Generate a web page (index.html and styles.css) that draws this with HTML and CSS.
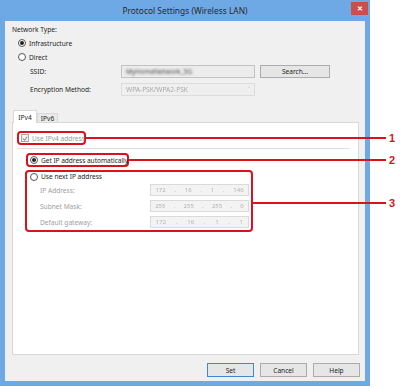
FILE: index.html
```html
<!DOCTYPE html>
<html lang="en">
<head>
    <meta charset="UTF-8">
    <title>Protocol Settings (Wireless LAN)</title>
    <link rel="stylesheet" href="styles.css">
</head>
<body>
<div class="page">
    <div class="window">
        <div class="titlebar">
            <span class="title">Protocol Settings (Wireless LAN)</span>
            <span class="close">&#10005;</span>
        </div>
        <div class="client">
            <div class="label">Network Type:</div>
            <div class="radio-row"><span class="radio on"></span>Infrastructure</div>
            <div class="radio-row"><span class="radio"></span>Direct</div>
            <div class="field-row ssid">
                <span class="field-label">SSID:</span>
                <span class="input"><span class="blur">MyHomeNetwork_5G</span></span>
                <span class="btn search">Search...</span>
            </div>
            <div class="field-row enc">
                <span class="field-label">Encryption Method:</span>
                <span class="select"><span class="blur light">WPA-PSK/WPA2-PSK</span><span class="arrow">&#709;</span></span>
            </div>
            <div class="tabs">
                <span class="tab active">IPv4</span>
                <span class="tab">IPv6</span>
            </div>
            <div class="panel">
                <div class="mark box1">
                    <span class="check">
                        <svg width="7" height="7" viewBox="0 0 7 7"><path d="M1 3.5 L3 5.5 L6 1.5" fill="none" stroke="#8a8a8a" stroke-width="1.2"/></svg>
                    </span>
                    <span class="dim">Use IPv4 address</span>
                </div>
                <div class="sep"></div>
                <div class="mark box2">
                    <span class="radio on"></span>Get IP address automatically
                </div>
                <div class="mark box3">
                    <div class="radio-row small"><span class="radio"></span>Use next IP address</div>
                    <div class="ip-row">
                        <span class="ip-label">IP Address:</span>
                        <span class="ip"><span>172</span>.<span>16</span>.<span>1</span>.<span>146</span></span>
                    </div>
                    <div class="ip-row">
                        <span class="ip-label">Subnet Mask:</span>
                        <span class="ip"><span>255</span>.<span>255</span>.<span>255</span>.<span>0</span></span>
                    </div>
                    <div class="ip-row">
                        <span class="ip-label">Default gateway:</span>
                        <span class="ip"><span>172</span>.<span>16</span>.<span>1</span>.<span>1</span></span>
                    </div>
                </div>
            </div>
            <div class="buttons">
                <span class="btn default">Set</span>
                <span class="btn">Cancel</span>
                <span class="btn">Help</span>
            </div>
        </div>
    </div>

    <!-- callouts -->
    <div class="callout-line" style="left: 86px; top: 137px; width: 300px;"></div>
    <div class="callout-num" style="top: 132px;">1</div>
    <div class="callout-line" style="left: 128px; top: 159px; width: 258px;"></div>
    <div class="callout-num" style="top: 154px;">2</div>
    <div class="callout-line" style="left: 253px; top: 202px; width: 133px;"></div>
    <div class="callout-num" style="top: 197px;">3</div>
</div>
</body>
</html>
```

FILE: styles.css
```css
body {
    margin: 0;
    background: #fff;
    font-family: "Noto Sans", "Open Sans", sans-serif;
    font-size: 6.6px;
    color: #1e1e1e;
    white-space: nowrap;
}
.page {
    position: relative;
    width: 400px;
    height: 388px;
}
.window {
    width: 370px;
    height: 386px;
    box-sizing: border-box;
    padding: 0 5px 5px 5px;
    background: #6fa9e5;
    display: flex;
    flex-direction: column;
}
.titlebar {
    position: relative;
    height: 21px;
    display: flex;
    align-items: center;
    justify-content: center;
}
.title {
    font-size: 8.4px;
    color: #2a2a2a;
}
.close {
    position: absolute;
    right: -3px;
    top: 2px;
    width: 17px;
    height: 13px;
    background: #c94f4d;
    color: #fff;
    font-size: 7px;
    font-weight: bold;
    display: flex;
    align-items: center;
    justify-content: center;
}
.client {
    flex: 1;
    background: #f0f0f0;
    padding: 3px 5px 0 7px;
    display: flex;
    flex-direction: column;
}
.label {
    height: 12px;
    line-height: 12px;
}
.radio-row {
    height: 14px;
    display: flex;
    align-items: center;
    padding-left: 6px;
}
.radio {
    width: 6px;
    height: 6px;
    border: 1px solid #555;
    border-radius: 50%;
    background: #fff;
    margin-right: 3px;
    display: inline-flex;
    align-items: center;
    justify-content: center;
    flex: none;
}
.radio.on::after {
    content: "";
    width: 4px;
    height: 4px;
    border-radius: 50%;
    background: #222;
}
.field-row {
    display: flex;
    align-items: center;
    height: 13px;
    padding-left: 18px;
}
.field-row.ssid {
    margin-top: 1px;
}
.field-row.enc {
    margin-top: 5px;
}
.field-label {
    width: 91px;
}
.input, .select {
    width: 134px;
    height: 13px;
    box-sizing: border-box;
    border: 1px solid #c2c2c2;
    background: #ececec;
    display: flex;
    align-items: center;
    padding-left: 4px;
}
.select {
    border-color: #dcdcdc;
    background: #efefef;
    justify-content: space-between;
    padding-right: 4px;
}
.arrow {
    color: #b0b0b0;
    font-size: 7px;
}
.blur {
    filter: blur(0.9px);
    color: #4a4a4a;
}
.blur.light {
    color: #a8a8a8;
    filter: blur(0.7px);
}
.btn {
    width: 47px;
    height: 14px;
    box-sizing: border-box;
    border: 1px solid #acacac;
    background: #e6e6e6;
    display: flex;
    align-items: center;
    justify-content: center;
}
.btn.search {
    width: 70px;
    height: 13px;
    margin-left: 5px;
}
.btn.default {
    border-color: #3d8ad0;
}
.tabs {
    display: flex;
    align-items: flex-end;
    margin-top: 14px;
    margin-left: 1px;
    height: 12px;
    position: relative;
    z-index: 1;
}
.tab {
    height: 9px;
    width: 21px;
    box-sizing: border-box;
    border: 1px solid #d9d9d9;
    border-bottom: none;
    background: #eaeaea;
    display: flex;
    align-items: center;
    justify-content: center;
}
.tab.active {
    width: 24px;
    height: 13px;
    margin-bottom: -1px;
    background: #fff;
}
.panel {
    width: 347px;
    height: 233px;
    box-sizing: border-box;
    border: 1px solid #d9d9d9;
    background: #fff;
    padding: 8px 8px 0 4px;
    display: flex;
    flex-direction: column;
    align-items: flex-start;
}
.mark {
    border: 2px solid #d7141d;
    border-radius: 4px;
    box-sizing: border-box;
}
.box1 {
    height: 14px;
    width: 69px;
    padding-left: 2px;
    display: flex;
    align-items: center;
}
.check {
    width: 6px;
    height: 6px;
    border: 1px solid #a8a8a8;
    background: #f2f2f2;
    margin-right: 3px;
    display: flex;
    align-items: center;
    justify-content: center;
}
.dim {
    color: #9a9a9a;
}
.sep {
    align-self: stretch;
    height: 1px;
    background: #dedede;
    margin-top: 3px;
}
.box2 {
    margin-top: 4px;
    margin-left: 9px;
    height: 14px;
    width: 103px;
    padding-left: 2px;
    display: flex;
    align-items: center;
    letter-spacing: -0.05px;
}
.box3 {
    margin-top: 3px;
    margin-left: 8px;
    width: 228px;
    height: 62px;
    padding: 0 2px 0 0;
}
.radio-row.small {
    height: 9px;
    padding-left: 3px;
}
.ip-row {
    display: flex;
    align-items: center;
    margin-top: 3px;
    padding-left: 13px;
    height: 12px;
}
.ip-row + .ip-row {
    margin-top: 4px;
}
.ip-label {
    width: 110px;
    color: #a0a0a0;
}
.ip {
    width: 99px;
    height: 12px;
    box-sizing: border-box;
    border: 1px solid #dadada;
    background: #f3f3f3;
    display: flex;
    align-items: center;
    justify-content: space-around;
    color: #b3b3b3;
    filter: blur(0.4px);
    font-size: 6px;
}
.buttons {
    display: flex;
    justify-content: flex-end;
    gap: 6px;
    margin-top: 8px;
}
.callout-line {
    position: absolute;
    height: 2px;
    background: #d7141d;
}
.callout-num {
    position: absolute;
    left: 389px;
    font-family: "Liberation Sans", Arial, sans-serif;
    font-weight: bold;
    font-size: 11px;
    line-height: 12px;
    color: #d7141d;
}
```
